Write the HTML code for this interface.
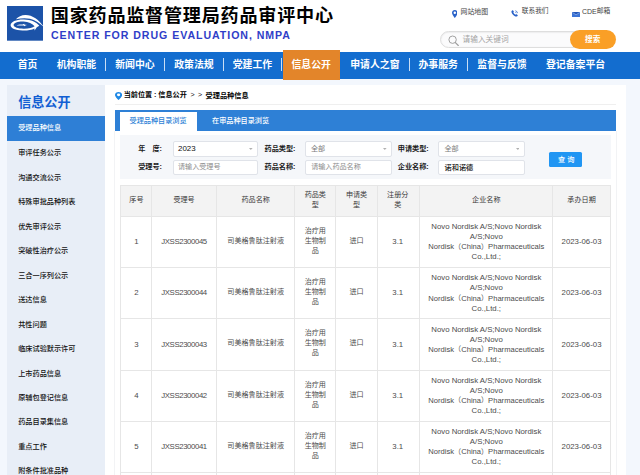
<!DOCTYPE html>
<html lang="zh-CN"><head><meta charset="utf-8"><title>国家药品监督管理局药品审评中心</title>
<style>
html,body{margin:0;padding:0}
body{width:640px;height:475px;overflow:hidden;background:#f3f7fd;font-family:"Liberation Sans","Noto Sans CJK SC",sans-serif}
#p{position:relative;width:640px;height:475px;overflow:hidden;background:#f3f7fd}
#p div,#p .a,#p .t,#p button{position:absolute;margin:0;padding:0;border:0}
#p .t{display:flex;align-items:center;height:12px;white-space:pre;line-height:1;font-weight:normal;font-size:7px;text-decoration:none}
.k{flex:none;line-height:1;white-space:nowrap;font-family:"Liberation Sans","Noto Sans CJK SC",sans-serif}
.l{flex:none;line-height:1}
#p .sub{font-size:10.6px;font-weight:bold;color:#2f3ec8;letter-spacing:0.95px}
</style></head>
<body>
<div id="p">
<header>
<div style="left:0px;top:0px;width:640px;height:52px;background:#fff;"></div>
<svg class="a" style="left:7px;top:6.3px;overflow:visible" width="36" height="34.7" viewBox="0 0 36 34.7"><rect width="36" height="34.7" fill="#1c53a8"/><path d="M8.9 13.3C11.3 10.6 14.5 9 18.4 8.9C25.2 8.8 32 13.5 37.2 21.3C33 17.3 28 14 23 12.8C18.5 11.7 13.5 12.1 8.9 13.3Z" fill="#fff"/><path d="M3.6 19.2C3.6 15.6 9.5 13.2 17 13.4C24 13.6 29.5 16 32.3 19.8L29.8 21.3L27.6 24.6L27.4 22.4C24.5 24 20 24.7 15.5 24.5C8.5 24.2 3.6 22.3 3.6 19.2ZM6.6 19C6.6 21.2 11 22.6 16.5 22.7C21.5 22.8 25.8 21.8 27.6 20.3C25.5 17.5 21.5 15.6 16.5 15.4C11 15.2 6.6 16.8 6.6 19Z" fill="#fff" fill-rule="evenodd"/><path d="M9.6 19.6C11 18.6 13.5 18.3 15.6 18.6L17.2 17.7L17.6 18.7C18.6 18.6 19.4 18.8 19.9 19.1C18.8 19.3 17.9 19.6 17.3 20.2L16.7 19.6C14.5 19.3 11.8 19.4 9.6 19.6Z" fill="#fff"/></svg>
<h1 class="t" style="left:50.8px;top:10.5px"><span class="k" style="font-size:18.1px;font-weight:bold;color:#000;letter-spacing:0.77px">国家药品监督管理局药品审评中心</span></h1>
<div class="t sub" style="left:51px;top:29.6px">CENTER FOR DRUG EVALUATION, NMPA</div>
<svg class="a" style="left:451.9px;top:9.5px" width="5.6" height="8" viewBox="0 0 12 17.2" preserveAspectRatio="none"><path d="M6 0C2.7 0 0 2.7 0 6C0 10 6 17.2 6 17.2S12 10 12 6C12 2.7 9.3 0 6 0ZM6 8.6A2.6 2.6 0 1 1 6 3.4A2.6 2.6 0 0 1 6 8.6Z" fill="#2a62c8"/></svg>
<div class="t" style="left:460.6px;top:6.1px"><span class="k" style="font-size:6.9px;color:#444">网站地图</span></div>
<svg class="a" style="left:511.2px;top:10.4px" width="7.6" height="7.2" viewBox="0 0 20 19"><path d="M3.2 1.2C4 0.4 5 0.5 5.6 1.3L7.3 3.8C7.8 4.6 7.6 5.4 6.9 6L6 6.8C7.2 9.2 9.2 11.2 11.8 12.4L12.7 11.5C13.3 10.9 14.1 10.8 14.8 11.3L17.3 13C18.1 13.6 18.2 14.6 17.5 15.3L16.4 16.4C15.2 17.6 13.4 17.7 11.6 17C6.8 15 3.2 11.4 1.4 6.8C0.7 5 0.9 3.4 2.1 2.3Z" fill="#2a62c8"/><path d="M11 1.2C14.8 1.6 17.6 4.4 18 8.2L16.4 8.3C16.1 5.3 13.9 3.1 10.9 2.8ZM11 4.4C13 4.7 14.5 6.2 14.8 8.2L13.2 8.4C13 7.1 12.1 6.2 10.8 6Z" fill="#2a62c8"/></svg>
<div class="t" style="left:521.8px;top:5.8px"><span class="k" style="font-size:6.7px;color:#444">联系我们</span></div>
<svg class="a" style="left:572px;top:11.7px" width="8.1" height="5.3" viewBox="0 0 20 14.5" preserveAspectRatio="none"><path d="M0 0H20V14.5H0Z" fill="#3c74d6"/><path d="M0 0H20V1.2L10 8L0 1.2Z" fill="#2458bb"/><path d="M0.6 1.2L10 7.6L19.4 1.2" fill="none" stroke="#cfe0fa" stroke-width="1.3"/></svg>
<div class="t" style="left:581.9px;top:5.9px"><span class="l" style="font-size:7px;font-weight:normal;color:#444">CDE</span><span class="k" style="font-size:6.8px;color:#444">邮箱</span></div>
<div class="srch" style="left:440.2px;top:31px;width:150px;height:17.2px;background:#fbfbfc;border:1px solid #dedede;border-radius:9px;box-sizing:border-box;box-shadow:inset 0 0.5px 1.5px rgba(0,0,0,.10)"></div>
<svg class="a" style="left:447.5px;top:35px" width="11.5" height="11.5" viewBox="0 0 11.5 11.5"><circle cx="4.6" cy="4.7" r="3.7" fill="none" stroke="#9c9c9c" stroke-width="0.95"/><path d="M7.4 7.6L10.3 10.5" stroke="#9c9c9c" stroke-width="1.15" stroke-linecap="round"/></svg>
<div class="t" style="left:462.5px;top:34px"><span class="k" style="font-size:7.7px;color:#a4a4a4">请输入关键词</span></div>
<div class="sbtn" style="left:570.2px;top:30px;width:46px;height:19.2px;background:#fa9f26;border-radius:9.6px"></div>
<div class="t" style="left:442.7px;width:300px;justify-content:center;top:33.7px"><span class="k" style="font-size:7.6px;font-weight:bold;color:#fff">搜索</span></div>
</header>
<nav>
<div style="left:0px;top:52px;width:640px;height:27px;background:#136dcf;"></div>
<div style="left:283px;top:50px;width:57.3px;height:29.7px;background:#e3852a;"></div>
<a class="t" style="left:17.7px;top:59.3px"><span class="k" style="font-size:9.88px;font-weight:bold;color:#fff">首页</span></a>
<a class="t" style="left:56.7px;top:59.3px"><span class="k" style="font-size:9.88px;font-weight:bold;color:#fff">机构职能</span></a>
<a class="t" style="left:115.2px;top:59.3px"><span class="k" style="font-size:9.88px;font-weight:bold;color:#fff">新闻中心</span></a>
<a class="t" style="left:174.2px;top:59.3px"><span class="k" style="font-size:9.88px;font-weight:bold;color:#fff">政策法规</span></a>
<a class="t" style="left:232.7px;top:59.3px"><span class="k" style="font-size:9.88px;font-weight:bold;color:#fff">党建工作</span></a>
<a class="t" style="left:291.45px;top:59.3px"><span class="k" style="font-size:9.88px;font-weight:bold;color:#fff">信息公开</span></a>
<a class="t" style="left:350.2px;top:59.3px"><span class="k" style="font-size:9.88px;font-weight:bold;color:#fff">申请人之窗</span></a>
<a class="t" style="left:418.45px;top:59.3px"><span class="k" style="font-size:9.88px;font-weight:bold;color:#fff">办事服务</span></a>
<a class="t" style="left:477.3px;top:59.3px"><span class="k" style="font-size:9.88px;font-weight:bold;color:#fff">监督与反馈</span></a>
<a class="t" style="left:545.95px;top:59.3px"><span class="k" style="font-size:9.88px;font-weight:bold;color:#fff">登记备案平台</span></a>
<div style="left:105px;top:58px;width:1px;height:13px;background:#c9def5;"></div>
<div style="left:164px;top:58px;width:1px;height:13px;background:#c9def5;"></div>
<div style="left:222.75px;top:58px;width:1px;height:13px;background:#c9def5;"></div>
<div style="left:280.7px;top:58px;width:1px;height:13px;background:#c9def5;"></div>
<div style="left:408.75px;top:58px;width:1px;height:13px;background:#c9def5;"></div>
<div style="left:467px;top:58px;width:1px;height:13px;background:#c9def5;"></div>
</nav>
<aside>
<div style="left:7px;top:85px;width:98px;height:390px;background:#e8eef7;"></div>
<h2 class="t" style="left:18.2px;top:97px"><span class="k" style="font-size:13.1px;font-weight:bold;color:#125fd3">信息公开</span></h2>
<div style="left:7px;top:116px;width:98px;height:25px;background:#2e7fd6;"></div>
<a class="t" style="left:18.2px;top:122.5px"><span class="k" style="font-size:7.17px;font-weight:500;color:#fff">受理品种信息</span></a>
<a class="t" style="left:18.2px;top:147.8px"><span class="k" style="font-size:7.17px;font-weight:500;color:#111">审评任务公示</span></a>
<a class="t" style="left:18.2px;top:172.28px"><span class="k" style="font-size:7.17px;font-weight:500;color:#111">沟通交流公示</span></a>
<a class="t" style="left:18.2px;top:196.76px"><span class="k" style="font-size:7.17px;font-weight:500;color:#111">特殊审批品种列表</span></a>
<a class="t" style="left:18.2px;top:221.24px"><span class="k" style="font-size:7.17px;font-weight:500;color:#111">优先审评公示</span></a>
<a class="t" style="left:18.2px;top:245.72px"><span class="k" style="font-size:7.17px;font-weight:500;color:#111">突破性治疗公示</span></a>
<a class="t" style="left:18.2px;top:270.2px"><span class="k" style="font-size:7.17px;font-weight:500;color:#111">三合一序列公示</span></a>
<a class="t" style="left:18.2px;top:294.68px"><span class="k" style="font-size:7.17px;font-weight:500;color:#111">送达信息</span></a>
<a class="t" style="left:18.2px;top:319.16px"><span class="k" style="font-size:7.17px;font-weight:500;color:#111">共性问题</span></a>
<a class="t" style="left:18.2px;top:343.64px"><span class="k" style="font-size:7.17px;font-weight:500;color:#111">临床试验默示许可</span></a>
<a class="t" style="left:18.2px;top:368.12px"><span class="k" style="font-size:7.17px;font-weight:500;color:#111">上市药品信息</span></a>
<a class="t" style="left:18.2px;top:392.6px"><span class="k" style="font-size:7.17px;font-weight:500;color:#111">原辅包登记信息</span></a>
<a class="t" style="left:18.2px;top:417.08px"><span class="k" style="font-size:7.17px;font-weight:500;color:#111">药品目录集信息</span></a>
<a class="t" style="left:18.2px;top:441.56px"><span class="k" style="font-size:7.17px;font-weight:500;color:#111">重点工作</span></a>
<a class="t" style="left:18.2px;top:466.04px"><span class="k" style="font-size:7.17px;font-weight:500;color:#111">附条件批准品种</span></a>
</aside>
<main>
<div style="left:105px;top:85px;width:521px;height:390px;background:#fff;"></div>
<svg class="a" style="left:114.8px;top:92.2px" width="7.2" height="8" viewBox="0 0 12 16" preserveAspectRatio="none"><path d="M6 0C2.7 0 0 2.6 0 5.8C0 9.6 6 16 6 16S12 9.6 12 5.8C12 2.6 9.3 0 6 0ZM6 8.4A2.7 2.7 0 1 1 6 3A2.7 2.7 0 0 1 6 8.4Z" fill="#1e88e5"/></svg>
<div class="t" style="left:123.75px;top:90px"><span class="k" style="font-size:7.1px;font-weight:bold;color:#000">当前位置</span></div>
<div class="t" style="left:154.1px;top:90px"><span class="l" style="font-size:7.1px;font-weight:bold;color:#111">:</span></div>
<div class="t" style="left:158.3px;top:90px"><span class="k" style="font-size:7.15px;font-weight:bold;color:#000">信息公开</span></div>
<div class="t" style="left:190.6px;top:90px"><span class="l" style="font-size:7.1px;font-weight:normal;color:#111">&gt;</span></div>
<div class="t" style="left:198px;top:90px"><span class="l" style="font-size:7.1px;font-weight:normal;color:#111">&gt;</span></div>
<div class="t" style="left:205.5px;top:90px"><span class="k" style="font-size:7.2px;font-weight:bold;color:#000">受理品种信息</span></div>
<div style="left:115px;top:104px;width:500.75px;height:1px;background:#efefef;"></div>
<div style="left:115px;top:110px;width:501px;height:21px;background:#2e80d6;"></div>
<div style="left:120px;top:112px;width:77px;height:19px;background:#fff;"></div>
<a class="t" style="left:129.5px;top:115.5px"><span class="k" style="font-size:7.15px;font-weight:500;color:#2c7fd6">受理品种目录浏览</span></a>
<a class="t" style="left:212px;top:115.5px"><span class="k" style="font-size:7.15px;font-weight:500;color:#fff">在审品种目录浏览</span></a>
<div style="left:114px;top:131px;width:1px;height:344px;background:#f2f3f5;"></div>
<div style="left:616px;top:131px;width:1px;height:344px;background:#f2f3f5;"></div>
<div style="left:120px;top:135px;width:490.5px;height:44px;background:#f5f7fa;"></div>
<label class="t" style="right:478px;justify-content:flex-end;top:143.4px"><span class="k" style="font-size:7.15px;font-weight:bold;color:#1a1a1a">年　度</span><span class="l" style="font-size:7.15px;font-weight:bold;color:#1a1a1a">:</span></label>
<label class="t" style="right:478px;justify-content:flex-end;top:161.4px"><span class="k" style="font-size:7.15px;font-weight:bold;color:#1a1a1a">受理号</span><span class="l" style="font-size:7.15px;font-weight:bold;color:#1a1a1a">:</span></label>
<label class="t" style="right:344.5px;justify-content:flex-end;top:143.4px"><span class="k" style="font-size:7.15px;font-weight:bold;color:#1a1a1a">药品类型</span><span class="l" style="font-size:7.15px;font-weight:bold;color:#1a1a1a">:</span></label>
<label class="t" style="right:344.5px;justify-content:flex-end;top:161.4px"><span class="k" style="font-size:7.15px;font-weight:bold;color:#1a1a1a">药品名称</span><span class="l" style="font-size:7.15px;font-weight:bold;color:#1a1a1a">:</span></label>
<label class="t" style="right:211.25px;justify-content:flex-end;top:143.4px"><span class="k" style="font-size:7.15px;font-weight:bold;color:#1a1a1a">申请类型</span><span class="l" style="font-size:7.15px;font-weight:bold;color:#1a1a1a">:</span></label>
<label class="t" style="right:211.25px;justify-content:flex-end;top:161.4px"><span class="k" style="font-size:7.15px;font-weight:bold;color:#1a1a1a">企业名称</span><span class="l" style="font-size:7.15px;font-weight:bold;color:#1a1a1a">:</span></label>
<div class="inp" style="left:172.5px;top:141.25px;width:85.5px;height:15.75px;background:#fff;border:1px solid #e0e3e9;border-radius:2px;box-sizing:border-box"></div>
<div class="inp" style="left:172.5px;top:159.5px;width:85.5px;height:15.6px;background:#fff;border:1px solid #e0e3e9;border-radius:2px;box-sizing:border-box"></div>
<svg class="a" style="left:249.4px;top:148.3px" width="3.6" height="2" viewBox="0 0 9 5"><path d="M0 0H9L4.5 5Z" fill="#b0b0b0"/></svg>
<div class="inp" style="left:304.5px;top:141.25px;width:87.5px;height:15.75px;background:#fff;border:1px solid #e0e3e9;border-radius:2px;box-sizing:border-box"></div>
<div class="inp" style="left:304.5px;top:159.5px;width:87.5px;height:15.6px;background:#fff;border:1px solid #e0e3e9;border-radius:2px;box-sizing:border-box"></div>
<svg class="a" style="left:383.4px;top:148.3px" width="3.6" height="2" viewBox="0 0 9 5"><path d="M0 0H9L4.5 5Z" fill="#b0b0b0"/></svg>
<div class="inp" style="left:438.25px;top:141.25px;width:86.25px;height:15.75px;background:#fff;border:1px solid #e0e3e9;border-radius:2px;box-sizing:border-box"></div>
<div class="inp" style="left:438.25px;top:159.5px;width:86.25px;height:15.6px;background:#fff;border:1px solid #e0e3e9;border-radius:2px;box-sizing:border-box"></div>
<svg class="a" style="left:515.9px;top:148.3px" width="3.6" height="2" viewBox="0 0 9 5"><path d="M0 0H9L4.5 5Z" fill="#b0b0b0"/></svg>
<div class="t" style="left:178px;top:143.4px"><span class="l" style="font-size:7.9px;font-weight:normal;color:#111">2023</span></div>
<div class="t" style="left:178px;top:161.2px"><span class="k" style="font-size:7.08px;color:#8c8c8c">请输入受理号</span></div>
<div class="t" style="left:311px;top:143.5px"><span class="k" style="font-size:7.1px;color:#7a7a7a">全部</span></div>
<div class="t" style="left:311.2px;top:161.2px"><span class="k" style="font-size:7.08px;color:#8c8c8c">请输入药品名称</span></div>
<div class="t" style="left:444.5px;top:143.5px"><span class="k" style="font-size:7.1px;color:#7a7a7a">全部</span></div>
<div class="t" style="left:444.5px;top:161.2px"><span class="k" style="font-size:7.2px;font-weight:500;color:#111">诺和诺德</span></div>
<button style="left:548.75px;top:151.5px;width:33px;height:15.5px;background:#2196f3;border-radius:1.5px"></button>
<div class="t" style="left:416.2px;width:300px;justify-content:center;top:153.3px"><span class="k" style="font-size:7.2px;font-weight:500;color:#fff">查</span><span class="k" style="font-size:7.2px;font-weight:500;color:#fff;margin-left:1.9px">询</span></div>
<section class="tbl">
<div style="left:120px;top:185px;width:491px;height:31px;background:#f3f3f3;"></div>
<div style="left:120px;top:185px;width:491px;height:1px;background:#e6e6e6;"></div>
<div style="left:120px;top:216px;width:491px;height:1px;background:#e6e6e6;"></div>
<div style="left:120px;top:267px;width:491px;height:1px;background:#e6e6e6;"></div>
<div style="left:120px;top:318px;width:491px;height:1px;background:#e6e6e6;"></div>
<div style="left:120px;top:370px;width:491px;height:1px;background:#e6e6e6;"></div>
<div style="left:120px;top:421px;width:491px;height:1px;background:#e6e6e6;"></div>
<div style="left:120px;top:472px;width:491px;height:1px;background:#e6e6e6;"></div>
<div style="left:120px;top:185px;width:1px;height:290px;background:#e6e6e6;"></div>
<div style="left:151px;top:185px;width:1px;height:290px;background:#e6e6e6;"></div>
<div style="left:216px;top:185px;width:1px;height:290px;background:#e6e6e6;"></div>
<div style="left:294px;top:185px;width:1px;height:290px;background:#e6e6e6;"></div>
<div style="left:335px;top:185px;width:1px;height:290px;background:#e6e6e6;"></div>
<div style="left:377px;top:185px;width:1px;height:290px;background:#e6e6e6;"></div>
<div style="left:419px;top:185px;width:1px;height:290px;background:#e6e6e6;"></div>
<div style="left:552px;top:185px;width:1px;height:290px;background:#e6e6e6;"></div>
<div style="left:610px;top:185px;width:1px;height:290px;background:#e6e6e6;"></div>
<div class="t" style="left:-13.57px;width:300px;justify-content:center;top:194.4px"><span class="k" style="font-size:7.1px;color:#3a3a3a">序号</span></div>
<div class="t" style="left:34.05px;width:300px;justify-content:center;top:194.4px"><span class="k" style="font-size:7.1px;color:#3a3a3a">受理号</span></div>
<div class="t" style="left:105.68px;width:300px;justify-content:center;top:194.4px"><span class="k" style="font-size:7.1px;color:#3a3a3a">药品名称</span></div>
<div class="t" style="left:165.3px;width:300px;justify-content:center;top:189.35px"><span class="k" style="font-size:7.1px;color:#3a3a3a">药品类</span></div>
<div class="t" style="left:165.3px;width:300px;justify-content:center;top:199.45px"><span class="k" style="font-size:7.1px;color:#3a3a3a">型</span></div>
<div class="t" style="left:206.55px;width:300px;justify-content:center;top:189.35px"><span class="k" style="font-size:7.1px;color:#3a3a3a">申请类</span></div>
<div class="t" style="left:206.55px;width:300px;justify-content:center;top:199.45px"><span class="k" style="font-size:7.1px;color:#3a3a3a">型</span></div>
<div class="t" style="left:247.75px;width:300px;justify-content:center;top:189.35px"><span class="k" style="font-size:7.1px;color:#3a3a3a">注册分</span></div>
<div class="t" style="left:247.75px;width:300px;justify-content:center;top:199.45px"><span class="k" style="font-size:7.1px;color:#3a3a3a">类</span></div>
<div class="t" style="left:336.3px;width:300px;justify-content:center;top:194.4px"><span class="k" style="font-size:7.1px;color:#3a3a3a">企业名称</span></div>
<div class="t" style="left:431.55px;width:300px;justify-content:center;top:194.4px"><span class="k" style="font-size:7.1px;color:#3a3a3a">承办日期</span></div>
<div class="t" style="left:-13.57px;width:300px;justify-content:center;top:236.12px"><span class="l" style="font-size:7.8px;font-weight:normal;color:#4c4c4c">1</span></div>
<div class="t" style="left:34.05px;width:300px;justify-content:center;top:236.12px"><span class="l" style="font-size:7.8px;font-weight:normal;color:#4c4c4c;letter-spacing:-0.4px">JXSS2300045</span></div>
<div class="t" style="left:105.68px;width:300px;justify-content:center;top:235.42px"><span class="k" style="font-size:7.1px;color:#4c4c4c">司美格鲁肽注射液</span></div>
<div class="t" style="left:165.3px;width:300px;justify-content:center;top:225.32px"><span class="k" style="font-size:7.1px;color:#4c4c4c">治疗用</span></div>
<div class="t" style="left:165.3px;width:300px;justify-content:center;top:235.42px"><span class="k" style="font-size:7.1px;color:#4c4c4c">生物制</span></div>
<div class="t" style="left:165.3px;width:300px;justify-content:center;top:245.52px"><span class="k" style="font-size:7.1px;color:#4c4c4c">品</span></div>
<div class="t" style="left:206.55px;width:300px;justify-content:center;top:235.42px"><span class="k" style="font-size:7.1px;color:#4c4c4c">进口</span></div>
<div class="t" style="left:247.75px;width:300px;justify-content:center;top:236.12px"><span class="l" style="font-size:7.8px;font-weight:normal;color:#4c4c4c">3.1</span></div>
<div class="t" style="left:336.3px;width:300px;justify-content:center;top:220.97px"><span class="l" style="font-size:7.8px;font-weight:normal;color:#4c4c4c">Novo Nordisk A/S;Novo Nordisk</span></div>
<div class="t" style="left:336.3px;width:300px;justify-content:center;top:231.07px"><span class="l" style="font-size:7.8px;font-weight:normal;color:#4c4c4c">A/S;Novo</span></div>
<div class="t" style="left:336.3px;width:300px;justify-content:center;top:241.17px"><span class="l" style="font-size:7.6px;font-weight:normal;color:#4c4c4c">Nordisk</span><span class="k" style="font-size:7.1px;color:#4c4c4c">（</span><span class="l" style="font-size:7.6px;font-weight:normal;color:#4c4c4c">China</span><span class="k" style="font-size:7.1px;color:#4c4c4c">）</span><span class="l" style="font-size:7.6px;font-weight:normal;color:#4c4c4c">Pharmaceuticals</span></div>
<div class="t" style="left:336.3px;width:300px;justify-content:center;top:251.27px"><span class="l" style="font-size:7.8px;font-weight:normal;color:#4c4c4c">Co.,Ltd.;</span></div>
<div class="t" style="left:431.55px;width:300px;justify-content:center;top:236.12px"><span class="l" style="font-size:7.8px;font-weight:normal;color:#4c4c4c">2023-06-03</span></div>
<div class="t" style="left:-13.57px;width:300px;justify-content:center;top:287.38px"><span class="l" style="font-size:7.8px;font-weight:normal;color:#4c4c4c">2</span></div>
<div class="t" style="left:34.05px;width:300px;justify-content:center;top:287.38px"><span class="l" style="font-size:7.8px;font-weight:normal;color:#4c4c4c;letter-spacing:-0.4px">JXSS2300044</span></div>
<div class="t" style="left:105.68px;width:300px;justify-content:center;top:286.68px"><span class="k" style="font-size:7.1px;color:#4c4c4c">司美格鲁肽注射液</span></div>
<div class="t" style="left:165.3px;width:300px;justify-content:center;top:276.57px"><span class="k" style="font-size:7.1px;color:#4c4c4c">治疗用</span></div>
<div class="t" style="left:165.3px;width:300px;justify-content:center;top:286.68px"><span class="k" style="font-size:7.1px;color:#4c4c4c">生物制</span></div>
<div class="t" style="left:165.3px;width:300px;justify-content:center;top:296.78px"><span class="k" style="font-size:7.1px;color:#4c4c4c">品</span></div>
<div class="t" style="left:206.55px;width:300px;justify-content:center;top:286.68px"><span class="k" style="font-size:7.1px;color:#4c4c4c">进口</span></div>
<div class="t" style="left:247.75px;width:300px;justify-content:center;top:287.38px"><span class="l" style="font-size:7.8px;font-weight:normal;color:#4c4c4c">3.1</span></div>
<div class="t" style="left:336.3px;width:300px;justify-content:center;top:272.23px"><span class="l" style="font-size:7.8px;font-weight:normal;color:#4c4c4c">Novo Nordisk A/S;Novo Nordisk</span></div>
<div class="t" style="left:336.3px;width:300px;justify-content:center;top:282.32px"><span class="l" style="font-size:7.8px;font-weight:normal;color:#4c4c4c">A/S;Novo</span></div>
<div class="t" style="left:336.3px;width:300px;justify-content:center;top:292.43px"><span class="l" style="font-size:7.6px;font-weight:normal;color:#4c4c4c">Nordisk</span><span class="k" style="font-size:7.1px;color:#4c4c4c">（</span><span class="l" style="font-size:7.6px;font-weight:normal;color:#4c4c4c">China</span><span class="k" style="font-size:7.1px;color:#4c4c4c">）</span><span class="l" style="font-size:7.6px;font-weight:normal;color:#4c4c4c">Pharmaceuticals</span></div>
<div class="t" style="left:336.3px;width:300px;justify-content:center;top:302.52px"><span class="l" style="font-size:7.8px;font-weight:normal;color:#4c4c4c">Co.,Ltd.;</span></div>
<div class="t" style="left:431.55px;width:300px;justify-content:center;top:287.38px"><span class="l" style="font-size:7.8px;font-weight:normal;color:#4c4c4c">2023-06-03</span></div>
<div class="t" style="left:-13.57px;width:300px;justify-content:center;top:338.62px"><span class="l" style="font-size:7.8px;font-weight:normal;color:#4c4c4c">3</span></div>
<div class="t" style="left:34.05px;width:300px;justify-content:center;top:338.62px"><span class="l" style="font-size:7.8px;font-weight:normal;color:#4c4c4c;letter-spacing:-0.4px">JXSS2300043</span></div>
<div class="t" style="left:105.68px;width:300px;justify-content:center;top:337.93px"><span class="k" style="font-size:7.1px;color:#4c4c4c">司美格鲁肽注射液</span></div>
<div class="t" style="left:165.3px;width:300px;justify-content:center;top:327.82px"><span class="k" style="font-size:7.1px;color:#4c4c4c">治疗用</span></div>
<div class="t" style="left:165.3px;width:300px;justify-content:center;top:337.93px"><span class="k" style="font-size:7.1px;color:#4c4c4c">生物制</span></div>
<div class="t" style="left:165.3px;width:300px;justify-content:center;top:348.03px"><span class="k" style="font-size:7.1px;color:#4c4c4c">品</span></div>
<div class="t" style="left:206.55px;width:300px;justify-content:center;top:337.93px"><span class="k" style="font-size:7.1px;color:#4c4c4c">进口</span></div>
<div class="t" style="left:247.75px;width:300px;justify-content:center;top:338.62px"><span class="l" style="font-size:7.8px;font-weight:normal;color:#4c4c4c">3.1</span></div>
<div class="t" style="left:336.3px;width:300px;justify-content:center;top:323.48px"><span class="l" style="font-size:7.8px;font-weight:normal;color:#4c4c4c">Novo Nordisk A/S;Novo Nordisk</span></div>
<div class="t" style="left:336.3px;width:300px;justify-content:center;top:333.57px"><span class="l" style="font-size:7.8px;font-weight:normal;color:#4c4c4c">A/S;Novo</span></div>
<div class="t" style="left:336.3px;width:300px;justify-content:center;top:343.68px"><span class="l" style="font-size:7.6px;font-weight:normal;color:#4c4c4c">Nordisk</span><span class="k" style="font-size:7.1px;color:#4c4c4c">（</span><span class="l" style="font-size:7.6px;font-weight:normal;color:#4c4c4c">China</span><span class="k" style="font-size:7.1px;color:#4c4c4c">）</span><span class="l" style="font-size:7.6px;font-weight:normal;color:#4c4c4c">Pharmaceuticals</span></div>
<div class="t" style="left:336.3px;width:300px;justify-content:center;top:353.77px"><span class="l" style="font-size:7.8px;font-weight:normal;color:#4c4c4c">Co.,Ltd.;</span></div>
<div class="t" style="left:431.55px;width:300px;justify-content:center;top:338.62px"><span class="l" style="font-size:7.8px;font-weight:normal;color:#4c4c4c">2023-06-03</span></div>
<div class="t" style="left:-13.57px;width:300px;justify-content:center;top:389.88px"><span class="l" style="font-size:7.8px;font-weight:normal;color:#4c4c4c">4</span></div>
<div class="t" style="left:34.05px;width:300px;justify-content:center;top:389.88px"><span class="l" style="font-size:7.8px;font-weight:normal;color:#4c4c4c;letter-spacing:-0.4px">JXSS2300042</span></div>
<div class="t" style="left:105.68px;width:300px;justify-content:center;top:389.18px"><span class="k" style="font-size:7.1px;color:#4c4c4c">司美格鲁肽注射液</span></div>
<div class="t" style="left:165.3px;width:300px;justify-content:center;top:379.07px"><span class="k" style="font-size:7.1px;color:#4c4c4c">治疗用</span></div>
<div class="t" style="left:165.3px;width:300px;justify-content:center;top:389.18px"><span class="k" style="font-size:7.1px;color:#4c4c4c">生物制</span></div>
<div class="t" style="left:165.3px;width:300px;justify-content:center;top:399.28px"><span class="k" style="font-size:7.1px;color:#4c4c4c">品</span></div>
<div class="t" style="left:206.55px;width:300px;justify-content:center;top:389.18px"><span class="k" style="font-size:7.1px;color:#4c4c4c">进口</span></div>
<div class="t" style="left:247.75px;width:300px;justify-content:center;top:389.88px"><span class="l" style="font-size:7.8px;font-weight:normal;color:#4c4c4c">3.1</span></div>
<div class="t" style="left:336.3px;width:300px;justify-content:center;top:374.73px"><span class="l" style="font-size:7.8px;font-weight:normal;color:#4c4c4c">Novo Nordisk A/S;Novo Nordisk</span></div>
<div class="t" style="left:336.3px;width:300px;justify-content:center;top:384.82px"><span class="l" style="font-size:7.8px;font-weight:normal;color:#4c4c4c">A/S;Novo</span></div>
<div class="t" style="left:336.3px;width:300px;justify-content:center;top:394.93px"><span class="l" style="font-size:7.6px;font-weight:normal;color:#4c4c4c">Nordisk</span><span class="k" style="font-size:7.1px;color:#4c4c4c">（</span><span class="l" style="font-size:7.6px;font-weight:normal;color:#4c4c4c">China</span><span class="k" style="font-size:7.1px;color:#4c4c4c">）</span><span class="l" style="font-size:7.6px;font-weight:normal;color:#4c4c4c">Pharmaceuticals</span></div>
<div class="t" style="left:336.3px;width:300px;justify-content:center;top:405.02px"><span class="l" style="font-size:7.8px;font-weight:normal;color:#4c4c4c">Co.,Ltd.;</span></div>
<div class="t" style="left:431.55px;width:300px;justify-content:center;top:389.88px"><span class="l" style="font-size:7.8px;font-weight:normal;color:#4c4c4c">2023-06-03</span></div>
<div class="t" style="left:-13.57px;width:300px;justify-content:center;top:441.12px"><span class="l" style="font-size:7.8px;font-weight:normal;color:#4c4c4c">5</span></div>
<div class="t" style="left:34.05px;width:300px;justify-content:center;top:441.12px"><span class="l" style="font-size:7.8px;font-weight:normal;color:#4c4c4c;letter-spacing:-0.4px">JXSS2300041</span></div>
<div class="t" style="left:105.68px;width:300px;justify-content:center;top:440.43px"><span class="k" style="font-size:7.1px;color:#4c4c4c">司美格鲁肽注射液</span></div>
<div class="t" style="left:165.3px;width:300px;justify-content:center;top:430.32px"><span class="k" style="font-size:7.1px;color:#4c4c4c">治疗用</span></div>
<div class="t" style="left:165.3px;width:300px;justify-content:center;top:440.43px"><span class="k" style="font-size:7.1px;color:#4c4c4c">生物制</span></div>
<div class="t" style="left:165.3px;width:300px;justify-content:center;top:450.53px"><span class="k" style="font-size:7.1px;color:#4c4c4c">品</span></div>
<div class="t" style="left:206.55px;width:300px;justify-content:center;top:440.43px"><span class="k" style="font-size:7.1px;color:#4c4c4c">进口</span></div>
<div class="t" style="left:247.75px;width:300px;justify-content:center;top:441.12px"><span class="l" style="font-size:7.8px;font-weight:normal;color:#4c4c4c">3.1</span></div>
<div class="t" style="left:336.3px;width:300px;justify-content:center;top:425.98px"><span class="l" style="font-size:7.8px;font-weight:normal;color:#4c4c4c">Novo Nordisk A/S;Novo Nordisk</span></div>
<div class="t" style="left:336.3px;width:300px;justify-content:center;top:436.07px"><span class="l" style="font-size:7.8px;font-weight:normal;color:#4c4c4c">A/S;Novo</span></div>
<div class="t" style="left:336.3px;width:300px;justify-content:center;top:446.18px"><span class="l" style="font-size:7.6px;font-weight:normal;color:#4c4c4c">Nordisk</span><span class="k" style="font-size:7.1px;color:#4c4c4c">（</span><span class="l" style="font-size:7.6px;font-weight:normal;color:#4c4c4c">China</span><span class="k" style="font-size:7.1px;color:#4c4c4c">）</span><span class="l" style="font-size:7.6px;font-weight:normal;color:#4c4c4c">Pharmaceuticals</span></div>
<div class="t" style="left:336.3px;width:300px;justify-content:center;top:456.27px"><span class="l" style="font-size:7.8px;font-weight:normal;color:#4c4c4c">Co.,Ltd.;</span></div>
<div class="t" style="left:431.55px;width:300px;justify-content:center;top:441.12px"><span class="l" style="font-size:7.8px;font-weight:normal;color:#4c4c4c">2023-06-03</span></div>
</section>
</main>
</div>
</body></html>
